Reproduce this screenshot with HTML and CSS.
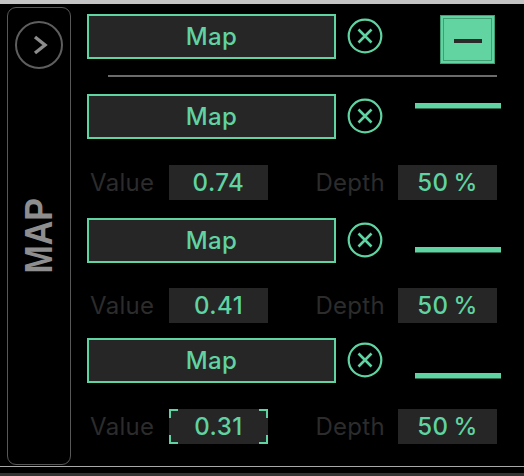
FILE: index.html
```html
<!DOCTYPE html>
<html>
<head>
<meta charset="utf-8">
<link rel="stylesheet" href="styles.css">
</head>
<body>
<div class="top-strip"></div>
<div class="main">
  <div class="side">
    <div class="side-btn">
      <svg width="16" height="20" viewBox="0 0 16 20"><path d="M3 2 L13 10 L3 18" fill="none" stroke="#8c8c8c" stroke-width="3.4"/></svg>
    </div>
    <div class="side-label">MAP</div>
  </div>
  <div class="content">
    <div class="row row-top">
      <div class="map-btn">Map</div>
      <div class="xbtn"><svg width="36" height="36" viewBox="0 0 36 36"><circle cx="18" cy="18" r="16.3" fill="none" stroke="#5fd3a1" stroke-width="2.2"/><path d="M11.5 11.5 L24.5 24.5 M24.5 11.5 L11.5 24.5" stroke="#5fd3a1" stroke-width="2.6"/></svg></div>
      <div class="right"><div class="minus-box"><div class="minus"></div></div></div>
    </div>
    <div class="sep"></div>
    <div class="row r2">
      <div class="map-btn">Map</div>
      <div class="xbtn"><svg width="36" height="36" viewBox="0 0 36 36"><circle cx="18" cy="18" r="16.3" fill="none" stroke="#5fd3a1" stroke-width="2.2"/><path d="M11.5 11.5 L24.5 24.5 M24.5 11.5 L11.5 24.5" stroke="#5fd3a1" stroke-width="2.6"/></svg></div>
      <div class="right"><div class="bar b1"></div></div>
    </div>
    <div class="vrow v1">
      <div class="vlabel">Value</div>
      <div class="vbox">0.74</div>
      <div class="dlabel">Depth</div>
      <div class="vbox">50 %</div>
    </div>
    <div class="row r3">
      <div class="map-btn">Map</div>
      <div class="xbtn"><svg width="36" height="36" viewBox="0 0 36 36"><circle cx="18" cy="18" r="16.3" fill="none" stroke="#5fd3a1" stroke-width="2.2"/><path d="M11.5 11.5 L24.5 24.5 M24.5 11.5 L11.5 24.5" stroke="#5fd3a1" stroke-width="2.6"/></svg></div>
      <div class="right"><div class="bar b2"></div></div>
    </div>
    <div class="vrow v2">
      <div class="vlabel">Value</div>
      <div class="vbox">0.41</div>
      <div class="dlabel">Depth</div>
      <div class="vbox">50 %</div>
    </div>
    <div class="row r4">
      <div class="map-btn">Map</div>
      <div class="xbtn"><svg width="36" height="36" viewBox="0 0 36 36"><circle cx="18" cy="18" r="16.3" fill="none" stroke="#5fd3a1" stroke-width="2.2"/><path d="M11.5 11.5 L24.5 24.5 M24.5 11.5 L11.5 24.5" stroke="#5fd3a1" stroke-width="2.6"/></svg></div>
      <div class="right"><div class="bar b3"></div></div>
    </div>
    <div class="vrow v3">
      <div class="vlabel">Value</div>
      <div class="vbox focus">0.31
        <span class="corner tl"></span><span class="corner tr"></span><span class="corner bl"></span><span class="corner br"></span>
      </div>
      <div class="dlabel">Depth</div>
      <div class="vbox">50 %</div>
    </div>
  </div>
</div>
<div class="bottom-line"></div>
<div class="bottom-gap"></div>
<div class="bottom-bar"></div>
</body>
</html>
```

FILE: styles.css
```css
html, body {
  margin: 0;
  padding: 0;
  background: #000;
  width: 524px;
  height: 476px;
  overflow: hidden;
  font-family: Inter, "Noto Sans", sans-serif;
}
.top-strip {
  height: 4px;
  background: #c4c4c4;
}
.main {
  display: flex;
  height: 462px;
}
.side {
  box-sizing: border-box;
  width: 64px;
  height: 458px;
  margin: 3px 0 0 7px;
  border: 1.5px solid #585858;
  border-radius: 9px;
  display: flex;
  flex-direction: column;
  align-items: center;
}
.side-btn {
  box-sizing: border-box;
  width: 48px;
  height: 48px;
  margin-top: 12.5px;
  border: 2px solid #5e5e5e;
  border-radius: 50%;
  display: flex;
  align-items: center;
  justify-content: center;
  padding-left: 2px;
}
.side-label {
  margin-top: 129px;
  writing-mode: vertical-rl;
  transform: rotate(180deg) scaleX(1.12);
  font-family: "Liberation Sans", Arial, sans-serif;
  font-weight: bold;
  font-size: 34px;
  line-height: 34px;
  color: #8e8e8e;
}
.content {
  margin-left: 16px;
  padding-top: 10px;
  display: flex;
  flex-direction: column;
  width: 420px;
}
.row {
  display: flex;
  align-items: flex-start;
  height: 45px;
}
.row-top {
  height: 50px;
}
.map-btn {
  box-sizing: border-box;
  width: 249px;
  height: 45px;
  border: 2.5px solid #5fd3a1;
  background: #262626;
  color: #5fd3a1;
  font-size: 24px;
  letter-spacing: 0.4px;
  font-weight: 500;
  display: flex;
  align-items: center;
  justify-content: center;
}
.xbtn {
  width: 36px;
  height: 36px;
  margin: 4px 0 0 11px;
}
.right {
  margin-left: 17px;
  width: 100px;
  display: flex;
  flex-direction: column;
  align-items: flex-start;
}
.minus-box {
  box-sizing: border-box;
  margin: 1px 0 0 40px;
  width: 55px;
  height: 49px;
  background: #62d4a2;
  border: 1px solid #3f9f74;
  box-shadow: inset 0 0 0 2px #62d4a2, inset 0 0 0 3px #3f9f74;
  display: flex;
  align-items: center;
  justify-content: center;
}
.minus {
  width: 28px;
  height: 4px;
  background: #2a2a2a;
  margin-top: 3px;
}
.sep {
  margin: 11px 0 0 21px;
  width: 389px;
  height: 2px;
  background: #6b6b6b;
}
.r2 { margin-top: 17px; }
.r3 { margin-top: 18px; }
.r4 { margin-top: 15px; }
.bar {
  margin-left: 15px;
  width: 86px;
  height: 5px;
  background: #5fd3a1;
  box-shadow: 0 1px 0 #2d6a50;
}
.b1 { margin-top: 9px; }
.b2 { margin-top: 29px; }
.b3 { margin-top: 35px; }
.vrow {
  display: flex;
  align-items: center;
  height: 35px;
}
.v1 { margin-top: 26px; }
.v2 { margin-top: 25px; }
.v3 { margin-top: 26px; }
.vlabel {
  box-sizing: border-box;
  width: 82px;
  padding-left: 3px;
  color: #2c2c2c;
  font-size: 24px;
  letter-spacing: 0.3px;
}
.dlabel {
  width: 130px;
  text-align: right;
  padding-right: 13px;
  box-sizing: border-box;
  color: #2c2c2c;
  font-size: 24px;
  letter-spacing: 0.3px;
}
.vbox {
  position: relative;
  width: 99px;
  height: 35px;
  background: #262626;
  color: #5fd3a1;
  font-size: 24px;
  font-weight: 500;
  letter-spacing: 0.5px;
  word-spacing: -2px;
  display: flex;
  align-items: center;
  justify-content: center;
}
.corner {
  position: absolute;
  width: 7px;
  height: 7px;
  border-color: #5fd3a1;
  border-style: solid;
  border-width: 0;
}
.tl { left: 0; top: 0; border-top-width: 2.5px; border-left-width: 2.5px; }
.tr { right: 0; top: 0; border-top-width: 2.5px; border-right-width: 2.5px; }
.bl { left: 0; bottom: 0; border-bottom-width: 2.5px; border-left-width: 2.5px; }
.br { right: 0; bottom: 0; border-bottom-width: 2.5px; border-right-width: 2.5px; }
.bottom-line {
  height: 1px;
  background: #a8a8a8;
}
.bottom-gap {
  height: 6px;
}
.bottom-bar {
  height: 3px;
  background: #333;
}
```
